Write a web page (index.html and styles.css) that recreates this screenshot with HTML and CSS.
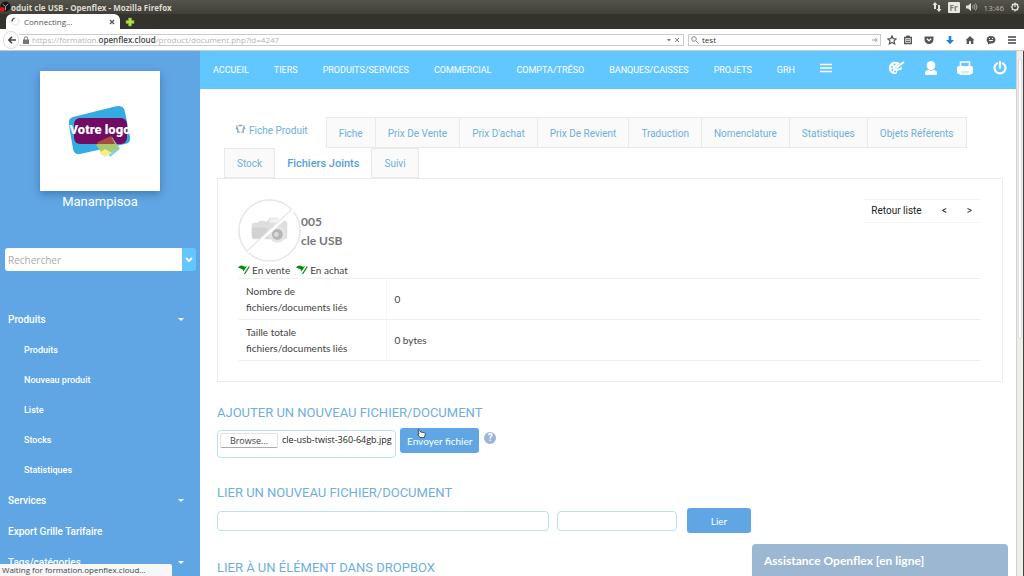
FILE: index.html
```html
<!DOCTYPE html>
<html lang="fr">
<head>
<meta charset="utf-8">
<title>Produit cle USB - Openflex</title>
<link rel="stylesheet" href="styles.css">
</head>
<body>
<div class="window">
  <header class="titlebar">
    <svg class="app-badge" viewBox="0 0 12 12"><circle cx="6" cy="5.500" r="5.500" fill="#161616"/><path d="M6 5.500 3 3M6 5.500l3-3M6 5.500v4" stroke="#aaa" stroke-width="1"/><circle cx="2.500" cy="8.500" r="2.500" fill="#f21313"/></svg>
    <span class="window-title">oduit cle USB - Openflex - Mozilla Firefox</span>
    <div class="indicators">
      <svg width="10" height="10" viewBox="0 0 10 10"><path d="M3 0 5.500 3H4v4H2V3H.5zM7 10 4.500 7H6V3h2v4h1.500z" fill="#e4e2da"/></svg>
      <span class="lang">Fr</span>
      <svg width="12" height="10" viewBox="0 0 12 10"><path d="M0 3.500h2L5 1v8L2 6.500H0z" fill="#e4e2da"/><path d="M6.500 3.500q1 1.500 0 3M8 2.500q2 2.500 0 5M9.500 1.500q3 3.500 0 7" fill="none" stroke="#aaa89e"/></svg>
      <time>13:46</time>
      <svg width="10" height="10" viewBox="0 0 10 10"><circle cx="5" cy="5" r="3" fill="none" stroke="#e4e2da" stroke-width="1.300"/><path d="M5 .5V5M.8 5h1.500M7.700 5h1.500M2 2l1 1M8 2 7 3M2 8l1-1M8 8 7 7M5 8v1.500" stroke="#e4e2da" stroke-width="1.200"/></svg>
    </div>
  </header>
  <div class="tabstrip">
    <div class="browser-tab">
      <svg width="9" height="9" viewBox="0 0 9 9"><circle cx="4.500" cy="4.500" r="3.500" fill="none" stroke="#bbb" stroke-dasharray="1 1.200"/><path d="M1 4.500A3.500 3.500 0 0 1 3.500 1.200" fill="none" stroke="#555" stroke-width="1.300"/></svg>
      <span>Connecting…</span>
      <button class="plain" aria-label="Fermer"><svg width="6" height="6" viewBox="0 0 6 6"><path d="m1 1 4 4M5 1 1 5" stroke="#555" stroke-width="1.300"/></svg></button>
    </div>
    <button class="plain" aria-label="Nouvel onglet"><svg width="10" height="10" viewBox="0 0 10 10"><path d="M3.500 1h3v2.500H9v3H6.500V9h-3V6.500H1v-3h2.500z" fill="#b6e04a" stroke="#7d9f2c" stroke-width=".6"/></svg></button>
  </div>
  <div class="toolbar">
    <button class="plain back" aria-label="Retour"><svg width="8" height="8" viewBox="0 0 8 8"><path d="M4 .8.900 4 4 7.200M1 4h7" fill="none" stroke="#444" stroke-width="1.600"/></svg></button>
    <div class="urlbar">
      <svg width="6" height="8" viewBox="0 0 6 8"><path d="M1.300 4V2.500a1.700 1.700 0 0 1 3.400 0V4" fill="none" stroke="#777"/><path d="M0 3.500h6V8H0z" fill="#777"/></svg>
      <span class="url">https://formation.<b>openflex.cloud</b>/product/document.php?id=4247</span>
      <svg width="12" height="6" viewBox="0 0 12 6"><path d="M0 2h4L2 4.500z" fill="#777"/><path d="m8 1 4 4M12 1 8 5" stroke="#888"/></svg>
    </div>
    <div class="searchbar">
      <svg width="8" height="8" viewBox="0 0 8 8"><circle cx="3" cy="3" r="2.300" fill="none" stroke="#888"/><path d="m5 5 2.500 2.500" stroke="#888"/></svg>
      <input class="web-search" type="text" aria-label="Recherche web" value="test">
      <svg width="6" height="6" viewBox="0 0 6 6"><path d="M0 3h5M3 .8 5.200 3 3 5.200" fill="none" stroke="#999"/></svg>
    </div>
    <div class="tools">
      <span class="bookmarks">
        <svg viewBox="0 0 10 10"><path d="m5 .9 1.200 2.700 3 .3L7 5.900l.7 3L5 7.400 2.300 8.900l.7-3L.8 3.900l3-.3z" fill="none" stroke="#555" stroke-width="1.200"/></svg>
        <svg viewBox="0 0 10 10"><path d="M1.700 2.500h6.600v6H1.700z" fill="none" stroke="#555" stroke-width="1.400"/><path d="M3.500 1h3v1.500h-3zM3 4.800h4M3 6.600h4" fill="#555" stroke="#555"/></svg>
      </span>
      <svg viewBox="0 0 10 10"><path d="M.5 1.500h9v3a4.500 4.500 0 0 1-9 0z" fill="#555"/><path d="m2.800 3.800 2.200 2 2.200-2" fill="none" stroke="#fff" stroke-width="1.200"/></svg>
      <svg viewBox="0 0 10 10"><path d="M3.700 1h2.600v4H9L5 9.300 1 5h2.700z" fill="#1c83e3"/></svg>
      <svg viewBox="0 0 10 10"><path d="M5 1 .5 5.300h1.200V9H4V6.300h2V9h2.300V5.300h1.200z" fill="#555"/></svg>
      <svg viewBox="0 0 10 10"><ellipse cx="5" cy="4.700" rx="4.400" ry="3.800" fill="#555"/><path d="M2 7v2.600L5 8z" fill="#555"/><path d="M2.500 5q2.500 2.500 5 0z" fill="#fff"/><path d="M3 3.500h1M6 3.500h1" stroke="#fff"/></svg>
      <svg viewBox="0 0 10 10"><path d="M1 2h8M1 5h8M1 8h8" stroke="#444" stroke-width="1.500"/></svg>
    </div>
  </div>

  <div class="viewport">
    <aside class="sidebar">
      <div class="logo-card">
        <svg class="logo" viewBox="0 0 72 56" role="img" aria-label="Votre logo">
          <path d="M9 14 53 3q7-1 8 6l5 25q1 6-5 7L16 51q-6 1-7-5L5 22q-1-7 4-8z" fill="#35abe3"/>
          <rect x="10" y="15" width="53" height="26" rx="6" fill="#720b64"/>
          <path d="M38 40 48 34l8 12-10 8z" fill="#7fd3df"/><path d="m32 42 5-3h14l4 6-16 7z" fill="#a8c96c"/><path d="m34 39 13-6 4 8H33z" fill="#a84a3c"/><path d="m35 50 6-4 7 4-7 4z" fill="#f5ee88"/>
          <text x="36" y="31" text-anchor="middle" class="logo-text">Votre logo</text>
        </svg>
      </div>
      <p class="user">Manampisoa</p>
      <form class="side-search">
        <input type="search" placeholder="Rechercher" aria-label="Rechercher">
        <button type="button" aria-label="Ouvrir"><svg width="8" height="6" viewBox="0 0 8 6"><path d="m1 1 3 3 3-3" fill="none" stroke="#fff" stroke-width="1.800"/></svg></button>
      </form>
      <nav class="side-menu">
        <a class="top caret" href="#">Produits</a>
        <a class="sub" href="#">Produits</a>
        <a class="sub" href="#">Nouveau produit</a>
        <a class="sub" href="#">Liste</a>
        <a class="sub" href="#">Stocks</a>
        <a class="sub" href="#">Statistiques</a>
        <a class="top caret" href="#">Services</a>
        <a class="top" href="#">Export Grille Tarifaire</a>
        <a class="top caret" href="#">Tags/catégories</a>
      </nav>
      <div class="status">Waiting for formation.openflex.cloud…</div>
    </aside>

    <div class="page">
      <nav class="mainnav">
        <a href="#">ACCUEIL</a><a href="#">TIERS</a><a href="#">PRODUITS/SERVICES</a><a href="#">COMMERCIAL</a><a href="#">COMPTA/TRÉSO</a><a href="#">BANQUES/CAISSES</a><a href="#">PROJETS</a><a href="#">GRH</a>
        <button class="plain burger" aria-label="Menu"><svg width="12" height="10" viewBox="0 0 12 10"><path d="M0 1.500h12M0 5h12M0 8.500h12" stroke="#fff" stroke-width="1.400"/></svg></button>
        <div class="actions">
          <button class="plain" aria-label="Thème"><svg width="17" height="16" viewBox="0 0 17 16"><path d="M9 1C4 0 1 3 1 7c0 4 3 6 6 6 2 0 2-1 2-2s1-2 3-2 2-2 2-3L9 8 7 7l5-5z" fill="#fff"/><path d="m8 7 8-6" stroke="#fff" stroke-width="2"/><g fill="#63c7ff"><circle cx="4" cy="6" r="1"/><circle cx="6.500" cy="3.500" r="1"/><circle cx="4.500" cy="9" r="1"/><circle cx="7" cy="10.500" r="1"/></g></svg></button>
          <button class="plain" aria-label="Compte"><svg width="12" height="16" viewBox="0 0 12 16"><ellipse cx="6" cy="4.500" rx="4.300" ry="4.500" fill="#fff"/><path d="M1 14q-1 0-1-1v-1q0-3 4-3l2 1 2-1q4 0 4 3v1q0 1-1 1z" fill="#fff"/></svg></button>
          <button class="plain" aria-label="Imprimer"><svg width="16" height="16" viewBox="0 0 16 16"><path d="M3.500 6V1h9v5" fill="none" stroke="#fff" stroke-width="1.600"/><rect y="5" width="16" height="8" rx="2" fill="#fff"/><path d="M3.500 9h9v4.300h-9z" fill="#cfefff" stroke="#fff" stroke-width="1.400"/></svg></button>
          <button class="plain" aria-label="Déconnexion"><svg width="14" height="16" viewBox="0 0 14 16"><path d="M4 2.300a5.500 5.500 0 1 0 6 0M7 1v6" fill="none" stroke="#fff" stroke-width="2.200" stroke-linecap="round"/></svg></button>
        </div>
      </nav>

      <main class="content">
        <nav class="tabs">
          <div class="tab-row">
            <span class="tab-title"><svg width="11" height="10" viewBox="0 0 11 10"><path d="M3.500 1.500h4M1.500 1.500l1 3H.8M9.500 1.500l-1 3h1.700M2.800 5v3.200h2M8.200 5v3.200h-2" fill="none" stroke="#8ba5ba" stroke-width="1.300"/></svg>Fiche Produit</span>
            <a href="#">Fiche</a><a href="#">Prix De Vente</a><a href="#">Prix D'achat</a><a href="#">Prix De Revient</a><a href="#">Traduction</a><a href="#">Nomenclature</a><a href="#">Statistiques</a><a href="#">Objets Référents</a>
          </div>
          <div class="tab-row second">
            <a href="#">Stock</a><a href="#" class="active">Fichiers Joints</a><a href="#">Suivi</a>
          </div>
        </nav>
        <section class="panel">
          <div class="product">
            <svg class="photo" viewBox="0 0 64 64"><circle cx="32" cy="32" r="31" fill="#fff" stroke="#e6e6e6" stroke-width="1.500"/><path d="M14 26q0-2 3-2h3l2-2h5l2 1 3-4h8l2 3h5q3 0 3 3v13q0 3-3 3H17q-3 0-3-3z" fill="#dedede"/><path d="M32 20h9v4h-9z" fill="#f2f2f2"/><path d="M14 29h16v11H17q-3-1-3-3z" fill="#d2d2d2"/><circle cx="40" cy="36" r="8.500" fill="#e4e4e4"/><circle cx="40" cy="36" r="5.500" fill="#b5b5b5"/><circle cx="39" cy="36" r="2.500" fill="#dadada"/><path d="m10 54 46-43" stroke="#fff" stroke-width="3"/><path d="m9 53 46-43" stroke="#e6e6e6" stroke-width="1.200"/></svg>
            <h1>005<br>cle USB</h1>
            <div class="pager"><a href="#">Retour liste</a><a href="#">&lt;</a><a href="#">&gt;</a></div>
          </div>
          <div class="flags">
            <span><svg width="12" height="10" viewBox="0 0 12 10"><path d="M0 2.500Q2 0 4 .5l3 1.200 2-.4-3.500 5.200Q5 4 3 3.800z" fill="#078a12"/><path d="M11.300 1.500 6.500 9" stroke="#078a12" stroke-width="1.300"/></svg>En vente</span>
            <span><svg width="12" height="10" viewBox="0 0 12 10"><path d="M0 2.500Q2 0 4 .5l3 1.200 2-.4-3.500 5.200Q5 4 3 3.800z" fill="#078a12"/><path d="M11.300 1.500 6.500 9" stroke="#078a12" stroke-width="1.300"/></svg>En achat</span>
          </div>
          <table class="facts">
            <tr><th scope="row">Nombre de<br>fichiers/documents liés</th><td>0</td></tr>
            <tr><th scope="row">Taille totale<br>fichiers/documents liés</th><td>0 bytes</td></tr>
          </table>
        </section>

        <h2>AJOUTER UN NOUVEAU FICHIER/DOCUMENT</h2>
        <form class="upload">
          <div class="filebox"><button type="button" class="browse">Browse…</button><span>cle-usb-twist-360-64gb.jpg</span></div>
          <div class="send-wrap">
            <button type="button" class="primary">Envoyer fichier</button>
            <svg class="pointer" width="9" height="9" viewBox="0 0 9 9"><path d="M1 .7q1-.6 1.500.3L3.500 3l4 .8q1 .2.800 1.200L7.500 8.500H3L.8 5.500 2 5z" fill="#fff" stroke="#333" stroke-width=".8"/></svg>
          </div>
          <span class="help" title="Aide">?</span>
        </form>
        <h2>LIER UN NOUVEAU FICHIER/DOCUMENT</h2>
        <form class="link-form">
          <input class="link-url" type="text" aria-label="URL">
          <input class="link-label" type="text" aria-label="Libellé">
          <button type="button" class="primary">Lier</button>
        </form>
        <h2>LIER À UN ÉLÉMENT DANS DROPBOX</h2>
      </main>
      <button class="chat">Assistance Openflex [en ligne]</button>
    </div>
    <div class="scrollbar"><div class="thumb"></div></div>
  </div>
</div>
</body>
</html>
```
FILE: styles.css
```css
* { box-sizing: border-box; }
body { margin: 0; font-family: Lato, sans-serif; font-size: 10px; color: #444; background: #fff; }
a { text-decoration: none; color: inherit; }
button, input { font: inherit; color: inherit; }
svg { flex: none; display: block; }
.plain { background: none; border: 0; padding: 0; display: block; }
.window { height: 100vh; display: flex; flex-direction: column; overflow: hidden; }

.titlebar { flex: none; display: flex; align-items: center; height: 14px; padding-right: 4px; background: linear-gradient(#55534b, #3f3e38); color: #dfdbd2; font: 8px "DejaVu Sans", sans-serif; }
.app-badge { width: 11px; height: 12px; }
.window-title { font: bold 8px "Open Sans", sans-serif; }
.indicators { margin-left: auto; display: flex; align-items: center; gap: 6px; }
.indicators time { color: #b9b6ad; font: 8px "Open Sans", sans-serif; }
.lang { background: #e9e7df; color: #777; border-radius: 1px; padding: 0 2px; font: bold 8px/11px "Open Sans", sans-serif; }
.tabstrip { flex: none; height: 15px; display: flex; align-items: center; gap: 5px; padding-left: 6px; background: #34322d; }
.browser-tab { display: flex; align-items: center; gap: 4px; width: 114px; height: 15px; padding: 0 5px; background: #fff; border-radius: 6px 6px 0 0; color: #555; font: 8px "Open Sans", sans-serif; }
.browser-tab button { margin-left: auto; }
.toolbar { flex: none; display: flex; align-items: center; height: 22px; padding: 0 7px 0 3px; background: #fff; border-bottom: 1px solid #c9c9c9; font: 8px "Open Sans", sans-serif; }
.back { width: 16px; height: 18px; padding-left: 4px; border: 1px solid #ddd; border-radius: 9px; }
.urlbar { flex: 1; display: flex; align-items: center; gap: 3px; height: 12px; padding: 0 4px; border: 1px solid #ccc; border-left: 0; }
.url { flex: 1; color: #b5b5b5; }
.url b { color: #444; font-weight: 600; }
.searchbar { display: flex; align-items: center; gap: 3px; width: 193px; height: 12px; margin-left: 4px; padding: 0 2px; border: 1px solid #ccc; }
.web-search { flex: 1; min-width: 0; height: 10px; border: 0; padding: 0; color: #333; background: none; }
.tools { display: flex; justify-content: space-between; width: 136px; padding-left: 6px; }
.tools svg { width: 10px; height: 10px; }
.bookmarks { display: flex; gap: 6px; }

.viewport { flex: 1; min-height: 0; display: flex; }
.sidebar { position: relative; flex: none; width: 200px; overflow: hidden; background: #60a6e4; color: #fff; font-family: Roboto, sans-serif; }
.logo-card { width: 120px; height: 120px; margin: 20px auto 0; padding: 32px 24px; background: #fff; box-shadow: 0 3px 8px #2c5f9199; }
.logo { width: 72px; height: 56px; overflow: visible; }
.logo-text { font: 900 13px Roboto, sans-serif; fill: #fff; }
.user { margin: 2px 0 0; text-align: center; font-size: 13px; line-height: 18px; }
.side-search { display: flex; height: 23px; margin: 37px 4px 0 5px; }
.side-search input { flex: 1; min-width: 0; height: 23px; border: 0; padding: 0 3px; border-radius: 3px 0 0 3px; background: #fff; color: #777; font: 10px "Open Sans", sans-serif; }
.side-search input::placeholder { color: #aaa; }
.side-search button { width: 14px; padding: 0 3px; border: 0; border-radius: 0 3px 3px 0; background: #63c7ff; }
.side-menu { margin-top: 33px; font-weight: 500; }
.side-menu a { display: flex; align-items: center; justify-content: space-between; }
.side-menu .top { height: 31px; padding: 0 16px 0 8px; font-size: 10px; }
.side-menu .sub { height: 30px; padding-left: 24px; font-size: 9px; }
.caret::after { content: ""; border: 3px solid transparent; border-top-color: #fff; border-bottom: 0; }
.status { position: absolute; left: 0; bottom: 0; width: 172px; height: 12px; padding-left: 2px; background: #f7f7f7; border-radius: 0 2px 0 0; color: #444; font: 8px/12px "Open Sans", sans-serif; }

.page { position: relative; flex: 1; min-width: 0; overflow: hidden; }
.mainnav { display: flex; align-items: center; gap: 25px; height: 38px; padding: 0 9px 0 13px; background: #63c7ff; color: #fff; font: 9px Roboto, sans-serif; white-space: nowrap; }
.burger { padding-bottom: 4px; }
.actions { display: flex; align-items: center; gap: 20px; margin-left: auto; padding-bottom: 2px; }
.content { padding: 28px 13px 0 17px; }
.tabs { padding-left: 7px; font: 10px Roboto, sans-serif; color: #6eafdc; white-space: nowrap; }
.tab-row { display: flex; }
.tab-row a { height: 31px; padding: 0 12px; border: 1px solid #e9e9e9; border-left-width: 0; background: #fafafa; line-height: 31px; }
.tab-row.second a { height: 30px; line-height: 30px; }
.tab-row.second a:first-child { border-left-width: 1px; }
.tab-title { display: flex; gap: 3px; height: 31px; padding: 7px 18px 0 11px; border-right: 1px solid #e9e9e9; line-height: 13px; }
.tab-row a.active { background: #fff; border-color: transparent #e9e9e9 transparent transparent; font-weight: 500; font-size: 11px; color: #559fd6; }
.panel { padding: 20px 21px 20px 20px; border: 1px solid #ebebeb; }
.product { display: flex; align-items: flex-start; height: 63px; }
.photo { width: 63px; height: 63px; }
h1 { margin: 13px 0 0; font: bold 12px/19px Lato, sans-serif; color: #777; }
.pager { display: flex; gap: 20px; margin-left: auto; padding: 0 9px 0 7px; border: solid #f3f3f3; border-width: 1px 0; color: #222; font: 10px/22px Roboto, sans-serif; }
.flags { display: flex; gap: 6px; height: 16px; line-height: 16px; }
.flags span { display: flex; align-items: center; gap: 2px; }
.facts { width: 100%; border-collapse: collapse; border-bottom: 1px solid #efefef; }
.facts th, .facts td { height: 41px; padding: 0 8px; border-top: 1px solid #efefef; text-align: left; font-weight: normal; line-height: 16px; }
.facts th { width: 148px; border-right: 1px solid #f4f4f4; }
h2 { margin: 0; font: 13px/16px Roboto, sans-serif; color: #6eafdc; }
.panel + h2 { margin-top: 23px; }
.upload { display: flex; align-items: flex-start; height: 64px; padding-top: 7px; }
.filebox { display: flex; gap: 4px; width: 179px; height: 28px; margin-top: 2px; padding: 2px; border: 1px solid #b9e2ea; border-radius: 4px; font: 9px/14px "Open Sans", sans-serif; color: #222; white-space: nowrap; }
.browse { height: 15px; width: 58px; padding: 0; border: 1px solid #e2e2e2; border-bottom-color: #aaa; border-radius: 2px; background: #fff; line-height: 13px; color: #444; }
.send-wrap { position: relative; margin-left: 4px; }
.primary { height: 25px; padding: 0 7px; border: 0; border-radius: 3px; background: #60a6e4; color: #fff; }
.pointer { position: absolute; left: 17px; top: 1px; }
.help { width: 12px; height: 12px; margin: 4px 0 0 5px; border-radius: 6px; background: #9db6d8; color: #fff; text-align: center; font: bold 10px/12px Roboto, sans-serif; }
.link-form { display: flex; align-items: center; height: 59px; padding-bottom: 20px; }
.link-form input { height: 20px; border: 1px solid #b9e2ea; border-radius: 4px; background: #fff; }
.link-url { width: 332px; }
.link-label { width: 120px; margin-left: 8px; }
.link-form .primary { width: 64px; margin-left: 10px; }
.chat { position: absolute; right: 8px; bottom: 0; width: 256px; height: 32px; padding: 0 12px; border: 0; border-radius: 4px 4px 0 0; background: #9bb7d1; color: #fff; text-align: left; font: bold 12px Lato, sans-serif; }
.scrollbar { flex: none; width: 8px; padding: 8px 1px 0; background: #efeeea; border: solid #d0d0d0; border-width: 0 1px; border-right-color: #444; }
.thumb { height: 280px; background: #fff; border: 1px solid #ddd; border-radius: 3px; }
```
